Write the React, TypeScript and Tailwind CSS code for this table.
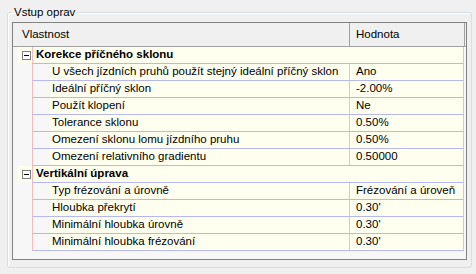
const groups = [
  {
    title: "Korekce příčného sklonu",
    items: [
      ["U všech jízdních pruhů použít stejný ideální příčný sklon", "Ano"],
      ["Ideální příčný sklon", "-2.00%"],
      ["Použít klopení", "Ne"],
      ["Tolerance sklonu", "0.50%"],
      ["Omezení sklonu lomu jízdního pruhu", "0.50%"],
      ["Omezení relativního gradientu", "0.50000"],
    ],
  },
  {
    title: "Vertikální úprava",
    items: [
      ["Typ frézování a úrovně", "Frézování a úroveň"],
      ["Hloubka překrytí", "0.30'"],
      ["Minimální hloubka úrovně", "0.30'"],
      ["Minimální hloubka frézování", "0.30'"],
    ],
  },
];

function Collapse() {
  return (
    <span className="flex h-[9px] w-[9px] items-center justify-center border border-[#808080] bg-white">
      <span className="h-px w-[5px] bg-black" />
    </span>
  );
}

function GroupRow({ title }: { title: string }) {
  return (
    <div className="flex h-[17px]">
      <div className="w-[19px] pl-[5px]">
        <div className="flex h-[16px] items-center bg-[#fffff0] pl-[4px]">
          <Collapse />
        </div>
      </div>
      <div className="flex w-[432px] border-x border-b border-x-[#f5bcbc] border-b-[#b8b8f0]">
        <div className="flex flex-1 items-center bg-[#fffff0] pl-[3px] font-bold">{title}</div>
      </div>
    </div>
  );
}

function PropRow({ name, value }: { name: string; value: string }) {
  return (
    <div className="flex h-[17px]">
      <div className="w-[19px]" />
      <div className="flex w-[432px] border-x border-b border-x-[#f5bcbc] border-b-[#b8b8f0]">
        <div className="w-[17px]" />
        <div className="flex w-[300px] items-center border-r border-[#f5bcbc] bg-[#fffff0] pl-[2px]">{name}</div>
        <div className="flex w-[113px] items-center whitespace-nowrap bg-[#fffff0] pl-[6px]">{value}</div>
      </div>
    </div>
  );
}

export default function App() {
  return (
    <div className="h-[274px] w-[476px] bg-[#f0f0f0] pt-[5px] font-['Liberation_Sans',Arial,sans-serif] text-[11.5px] text-black">
      <fieldset className="ml-[7px] w-[465px] rounded-[3px] border border-[#d5dfe5] px-[4px] pb-[7px] shadow-[inset_1px_1px_0_#fff]">
        <legend className="px-[2px] leading-[14px]">Vstup oprav</legend>
        <div className="mt-[3px] flex h-[238px] flex-col border border-[#828282] bg-[#f7f7f7]">
          <div className="flex h-[24px] shrink-0 border-b border-[#a0a0a0] bg-[#f0f0f0]">
            <div className="flex w-[337px] items-center border-r border-[#a0a0a0] pl-[9px]">Vlastnost</div>
            <div className="flex w-[115px] items-center border-r border-[#a0a0a0] pl-[6px]">Hodnota</div>
          </div>
          {groups.map((g) => (
            <div key={g.title}>
              <GroupRow title={g.title} />
              {g.items.map(([n, v]) => (
                <PropRow key={n} name={n} value={v} />
              ))}
            </div>
          ))}
        </div>
      </fieldset>
    </div>
  );
}
